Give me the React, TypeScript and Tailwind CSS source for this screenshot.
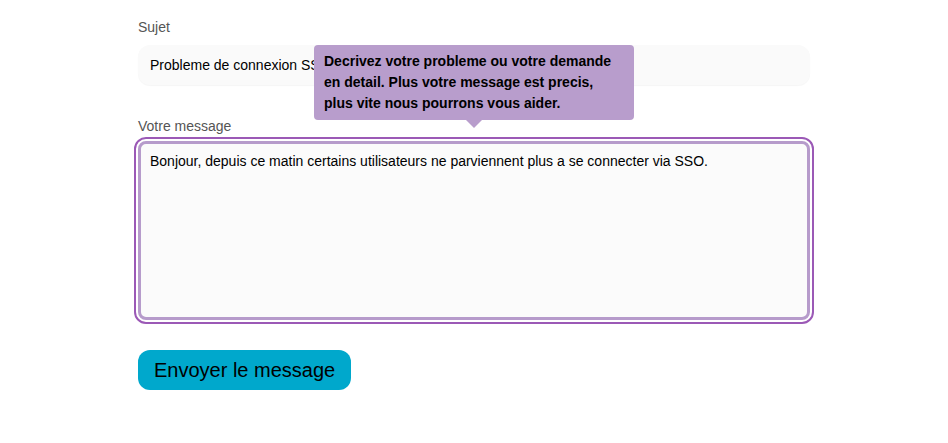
import React, { useState } from 'react';

const App = () => {
  const [subject, setSubject] = useState('Probleme de connexion SSO');
  const [message, setMessage] = useState(
    'Bonjour, depuis ce matin certains utilisateurs ne parviennent plus a se connecter via SSO.'
  );

  return (
    <div className="min-h-[443px] bg-white font-['Liberation_Sans',Arial,sans-serif]">
      <div className="mx-auto w-[672px] pt-[19px]">
        {/* Subject */}
        <label className="block text-sm leading-4 text-[#555]">Sujet</label>
        <input
          type="text"
          value={subject}
          onChange={e => setSubject(e.target.value)}
          className="mt-[10px] block h-[40px] w-full rounded-xl bg-[#fafafa] px-3 text-sm text-black shadow-[0_1px_1px_rgba(0,0,0,0.04)] outline-none"
        />

        {/* Message */}
        <label className="mt-[33px] block text-sm leading-4 text-[#555]">Votre message</label>
        <div className="relative mt-[7px]">
          <textarea
            value={message}
            onChange={e => setMessage(e.target.value)}
            className="block h-[179px] w-full resize-none rounded-lg border-[3px] border-[#b69bcb] bg-[#fbfbfb] px-[9px] py-[7px] text-sm leading-5 text-black outline-2 outline-offset-2 outline-[#9b59b6] [outline-style:solid]"
          />

          {/* Tooltip */}
          <div className="absolute bottom-[calc(100%+21px)] left-[176px] w-[320px] rounded bg-[#b89dcc] px-2.5 py-1.5 text-sm font-bold leading-[21px] text-black">
            Decrivez votre probleme ou votre demande en detail. Plus votre message est precis, plus vite nous pourrons vous aider.
            <span className="absolute left-[152px] top-full h-0 w-0 border-x-[8px] border-t-[8px] border-x-transparent border-t-[#b89dcc]" />
          </div>
        </div>

        <button className="mt-[30px] h-[40px] rounded-xl bg-[#00a8cc] px-4 text-xl text-black">
          Envoyer le message
        </button>
      </div>
    </div>
  );
};

export default App;
